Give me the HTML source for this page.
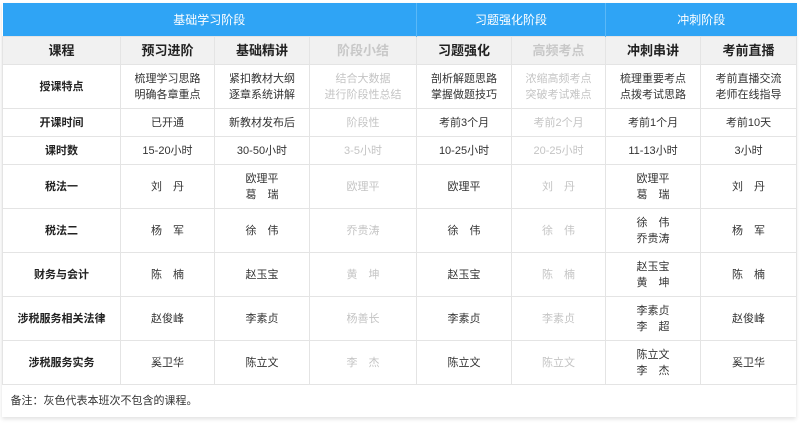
<!DOCTYPE html>
<html><head><meta charset="utf-8"><style>
html,body{margin:0;padding:0;background:#fff;width:800px;height:423px;overflow:hidden}
.wrap{position:absolute;left:2px;top:3px;width:794px;box-shadow:0 2px 4px rgba(0,0,0,0.12);background:#fff}
table{border-collapse:collapse;table-layout:fixed;width:794px;font-family:"Liberation Sans","Noto Sans CJK SC",sans-serif;font-size:11px;color:#333}
td{border:1px solid #e4e4e4;text-align:center;vertical-align:middle;padding:0;line-height:16px}
tr.top td{background:#2fa4f5;color:#fff;font-size:12px;height:33px;border:none;border-right:1px solid #5ab8f7}
tr.top td:last-child{border-right:none}
tr.hd td{background:#f1f1f1;font-size:13px;font-weight:bold;height:27px;color:#222}
td.l{font-weight:bold;color:#222}
.g{color:#c4c4c4}
tr.hd td.g{color:#c8c8c8}
tr.note td{text-align:left;padding-left:8px;height:32px;border:none;border-top:1px solid #e4e4e4}
</style></head><body>
<div class="wrap">
<table>
<colgroup><col style="width:118px"><col style="width:94px"><col style="width:95px"><col style="width:107px"><col style="width:95px"><col style="width:94px"><col style="width:95px"><col style="width:96px"></colgroup>
<tr class="top"><td colspan="4">基础学习阶段</td><td colspan="2">习题强化阶段</td><td colspan="2">冲刺阶段</td></tr>
<tr class="hd"><td>课程</td><td>预习进阶</td><td>基础精讲</td><td class="g">阶段小结</td><td>习题强化</td><td class="g">高频考点</td><td>冲刺串讲</td><td>考前直播</td></tr>
<tr style="height:44px"><td class="l">授课特点</td><td>梳理学习思路<br>明确各章重点</td><td>紧扣教材大纲<br>逐章系统讲解</td><td class="g">结合大数据<br>进行阶段性总结</td><td>剖析解题思路<br>掌握做题技巧</td><td class="g">浓缩高频考点<br>突破考试难点</td><td>梳理重要考点<br>点拨考试思路</td><td>考前直播交流<br>老师在线指导</td></tr>
<tr style="height:28px"><td class="l">开课时间</td><td>已开通</td><td>新教材发布后</td><td class="g">阶段性</td><td>考前3个月</td><td class="g">考前2个月</td><td>考前1个月</td><td>考前10天</td></tr>
<tr style="height:28px"><td class="l">课时数</td><td>15-20小时</td><td>30-50小时</td><td class="g">3-5小时</td><td>10-25小时</td><td class="g">20-25小时</td><td>11-13小时</td><td>3小时</td></tr>
<tr style="height:44px"><td class="l">税法一</td><td>刘　丹</td><td>欧理平<br>葛　瑞</td><td class="g">欧理平</td><td>欧理平</td><td class="g">刘　丹</td><td>欧理平<br>葛　瑞</td><td>刘　丹</td></tr>
<tr style="height:44px"><td class="l">税法二</td><td>杨　军</td><td>徐　伟</td><td class="g">乔贵涛</td><td>徐　伟</td><td class="g">徐　伟</td><td>徐　伟<br>乔贵涛</td><td>杨　军</td></tr>
<tr style="height:44px"><td class="l">财务与会计</td><td>陈　楠</td><td>赵玉宝</td><td class="g">黄　坤</td><td>赵玉宝</td><td class="g">陈　楠</td><td>赵玉宝<br>黄　坤</td><td>陈　楠</td></tr>
<tr style="height:44px"><td class="l">涉税服务相关法律</td><td>赵俊峰</td><td>李素贞</td><td class="g">杨善长</td><td>李素贞</td><td class="g">李素贞</td><td>李素贞<br>李　超</td><td>赵俊峰</td></tr>
<tr style="height:44px"><td class="l">涉税服务实务</td><td>奚卫华</td><td>陈立文</td><td class="g">李　杰</td><td>陈立文</td><td class="g">陈立文</td><td>陈立文<br>李　杰</td><td>奚卫华</td></tr>
<tr class="note"><td colspan="8">备注：灰色代表本班次不包含的课程。</td></tr>
</table>
</div>
</body></html>
